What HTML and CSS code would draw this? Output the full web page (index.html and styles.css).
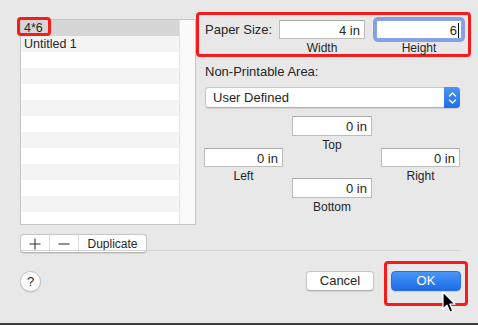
FILE: index.html
```html
<!DOCTYPE html>
<html lang="en">
<head>
    <meta charset="UTF-8">
    <meta name="viewport" content="width=device-width, initial-scale=1.0">
    <title>Paper Size</title>
    <link rel="stylesheet" href="styles.css">
</head>
<body>
    <div class="dialog">
        <div class="main">
            <div class="left">
                <div class="list">
                    <div class="rows">
                        <div class="row selected">4*6</div>
                        <div class="row">Untitled 1</div>
                        <div class="row"></div>
                        <div class="row"></div>
                        <div class="row"></div>
                        <div class="row"></div>
                        <div class="row"></div>
                        <div class="row"></div>
                        <div class="row"></div>
                        <div class="row"></div>
                        <div class="row"></div>
                        <div class="row"></div>
                        <div class="row"></div>
                    </div>
                    <div class="scroll"></div>
                    <span class="mark mark-row"></span>
                </div>
                <div class="seg">
                    <div class="seg-btn seg-icon">
                        <svg width="12" height="12" viewBox="0 0 12 12"><path d="M6 0.5V11.5M0.5 6H11.5" stroke="#333" stroke-width="1.1" fill="none"/></svg>
                    </div>
                    <div class="seg-btn seg-icon">
                        <svg width="12" height="12" viewBox="0 0 12 12"><path d="M0.5 6H11.5" stroke="#333" stroke-width="1.1" fill="none"/></svg>
                    </div>
                    <div class="seg-btn seg-text">Duplicate</div>
                </div>
            </div>

            <div class="right">
                <div class="paper mark">
                    <div class="paper-label">Paper Size:</div>
                    <div class="field-group">
                        <div class="field">4 in</div>
                        <div class="caption">Width</div>
                    </div>
                    <div class="field-group">
                        <div class="field focused">6<span class="caret"></span></div>
                        <div class="caption">Height</div>
                    </div>
                </div>

                <div class="np-label">Non-Printable Area:</div>

                <div class="popup">
                    <span class="popup-text">User Defined</span>
                    <span class="stepper">
                        <svg width="9" height="14" viewBox="0 0 9 14"><path d="M1.5 5L4.5 2L7.5 5M1.5 9L4.5 12L7.5 9" stroke="#fff" stroke-width="1.4" fill="none" stroke-linecap="round" stroke-linejoin="round"/></svg>
                    </span>
                </div>

                <div class="margins">
                    <div class="field-group m-top">
                        <div class="field small">0 in</div>
                        <div class="caption">Top</div>
                    </div>
                    <div class="field-group m-left">
                        <div class="field small">0 in</div>
                        <div class="caption">Left</div>
                    </div>
                    <div class="field-group m-right">
                        <div class="field small">0 in</div>
                        <div class="caption">Right</div>
                    </div>
                    <div class="field-group m-bottom">
                        <div class="field small">0 in</div>
                        <div class="caption">Bottom</div>
                    </div>
                </div>
            </div>
        </div>

        <div class="sep"></div>

        <div class="footer">
            <div class="help">?</div>
            <div class="spacer"></div>
            <div class="btn">Cancel</div>
            <div class="ok-wrap mark">
                <div class="btn primary">OK</div>
            </div>
        </div>
    </div>
    <div class="strip"></div>

    <svg class="cursor" width="14" height="23" viewBox="0 0 14 23">
        <path d="M1 1V18L5 14.2L8 21.2L10.8 20L7.9 13.2L13 13.2Z" fill="#000" stroke="#fff" stroke-width="1.2" stroke-linejoin="round"/>
    </svg>
</body>
</html>
```

FILE: styles.css
```css
body {
    margin: 0;
    width: 478px;
    height: 325px;
    overflow: hidden;
    position: relative;
    background-color: #e8e8e8;
    font-family: "Liberation Sans", Arial, sans-serif;
    font-size: 13px;
    color: #262626;
}
.dialog {
    height: 323px;
    display: flex;
    flex-direction: column;
}
.main {
    display: flex;
    height: 250px;
    padding-top: 12px;
    box-sizing: border-box;
}
.left {
    margin-left: 20px;
    width: 176px;
    padding-top: 7px;
}
.list {
    position: relative;
    display: flex;
    height: 206px;
    box-sizing: border-box;
    border: 1px solid #c4c4c4;
    background-color: #fff;
}
.rows {
    flex: 1;
    overflow: hidden;
}
.row {
    height: 16px;
    line-height: 16px;
    padding-left: 3px;
    font-size: 12.5px;
}
.row:nth-child(even) {
    background-color: #f4f4f4;
}
.row.selected {
    background-color: #d6d6d6;
}
.scroll {
    width: 15px;
    background-color: #fafafa;
    border-left: 1px solid #e2e2e2;
}
.mark {
    border: 3px solid #f41c1c;
    border-radius: 4px;
    box-sizing: border-box;
}
.mark-row {
    position: absolute;
    left: -4px;
    top: -3px;
    width: 34px;
    height: 19px;
}
.seg {
    display: flex;
    margin-top: 9px;
    width: 127px;
    height: 19px;
    box-sizing: border-box;
    background-color: #fff;
    border: 1px solid #c6c6c6;
    border-bottom-color: #b4b4b4;
    border-radius: 4px;
    box-shadow: 0 0.5px 1px rgba(0, 0, 0, 0.08);
}
.seg-btn {
    display: flex;
    align-items: center;
    justify-content: center;
    border-left: 1px solid #dcdcdc;
}
.seg-btn:first-child {
    border-left: none;
}
.seg-icon {
    width: 28px;
}
.seg-text {
    flex: 1;
    font-size: 12px;
}
.right {
    width: 275px;
}
.paper {
    display: flex;
    height: 45px;
    padding: 5px 6px 0 6px;
}
.paper-label {
    width: 74px;
    line-height: 19px;
}
.field-group {
    display: flex;
    flex-direction: column;
}
.paper .field-group + .field-group {
    margin-left: 11px;
}
.field {
    width: 86px;
    height: 19px;
    line-height: 19px;
    box-sizing: border-box;
    background-color: #fff;
    border: 1px solid #bcbcbc;
    border-top-color: #a9a9a9;
    text-align: right;
    padding-right: 4px;
}
.field.small {
    width: 80px;
    height: 20px;
}
.field.focused {
    border-color: #8aa6e6;
    border-radius: 2px;
    box-shadow: 0 0 0 3px #86a1e3;
    padding-right: 2px;
}
.caret {
    display: inline-block;
    width: 1px;
    height: 15px;
    margin-left: 1px;
    background-color: #000;
    vertical-align: -3px;
}
.caption {
    margin-top: 3px;
    font-size: 12px;
    line-height: 12px;
    text-align: center;
}
.np-label {
    margin-top: 7px;
    padding-left: 9px;
    line-height: 16px;
}
.popup {
    display: flex;
    align-items: center;
    margin: 7px 0 0 9px;
    width: 255px;
    height: 21px;
    box-sizing: border-box;
    background-color: #fff;
    border: 1px solid #c8c8c8;
    border-bottom-color: #b2b2b2;
    border-radius: 4px;
    box-shadow: 0 0.5px 1px rgba(0, 0, 0, 0.1);
}
.popup-text {
    flex: 1;
    padding-left: 7px;
}
.stepper {
    display: flex;
    align-items: center;
    justify-content: center;
    width: 16px;
    height: 21px;
    margin: -1px -1px -1px 0;
    background: linear-gradient(#4b93f8, #1f6fe8);
    border-radius: 0 4px 4px 0;
}
.margins {
    display: grid;
    grid-template-columns: 79px 80px 79px;
    grid-template-rows: 32px 30px 36px;
    column-gap: 9px;
    margin: 8px 0 0 8px;
}
.margins .field-group {
    align-self: start;
}
.m-top {
    grid-column: 2;
    grid-row: 1;
}
.m-left {
    grid-column: 1;
    grid-row: 2;
}
.m-left .field {
    width: 79px;
    height: 19px;
}
.m-right {
    grid-column: 3;
    grid-row: 2;
}
.m-right .field {
    width: 79px;
    height: 19px;
}
.m-bottom {
    grid-column: 2;
    grid-row: 3;
}
.sep {
    height: 1px;
    margin: 0 18px 0 20px;
    background-color: #d3d3d3;
}
.footer {
    display: flex;
    align-items: flex-start;
    padding: 10px 10px 0 20px;
}
.help {
    width: 21px;
    height: 21px;
    margin-top: 10px;
    box-sizing: border-box;
    border: 1px solid #c2c2c2;
    border-radius: 50%;
    background-color: #fff;
    box-shadow: 0 0.5px 1px rgba(0, 0, 0, 0.15);
    text-align: center;
    line-height: 19px;
    font-size: 13px;
}
.spacer {
    flex: 1;
}
.btn {
    width: 68px;
    height: 20px;
    margin-top: 10px;
    margin-right: 10px;
    box-sizing: border-box;
    background-color: #fff;
    border: 1px solid #c6c6c6;
    border-bottom-color: #b0b0b0;
    border-radius: 4px;
    box-shadow: 0 0.5px 1px rgba(0, 0, 0, 0.1);
    text-align: center;
    line-height: 18px;
}
.ok-wrap {
    width: 84px;
    height: 45px;
    padding: 7px 4px 0 4px;
}
.btn.primary {
    width: 70px;
    margin: 0;
    color: #fff;
    border-color: #2a6fe0;
    background: linear-gradient(#4a95f8, #1d6ce8);
}
.strip {
    height: 2px;
    background-color: #3c3c3c;
}
.cursor {
    position: absolute;
    left: 442px;
    top: 291px;
}
```
